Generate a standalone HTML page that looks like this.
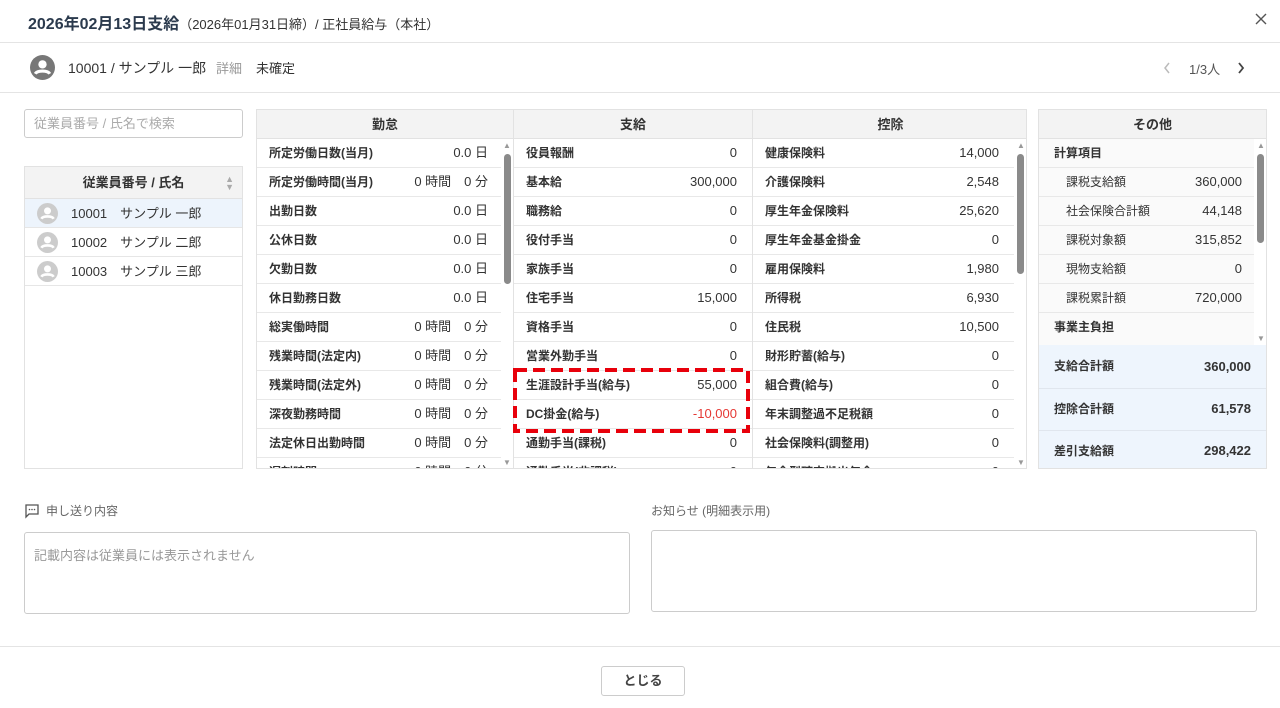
<!DOCTYPE html>
<html><head><meta charset="utf-8"><style>
*{box-sizing:border-box;margin:0;padding:0}
body{width:1280px;height:708px;background:#fff;font-family:"Liberation Sans","Noto Sans CJK JP",sans-serif;color:#333;position:relative;overflow:hidden}
.a{position:absolute}
.hr{position:absolute;left:0;width:1280px;height:1px;background:#e4e4e4}
.row{position:absolute;left:0;right:0;height:29px;line-height:28px;border-bottom:1px solid #e8e8e8;font-size:12px;font-weight:bold;color:#333}
.row .l{position:absolute;left:12px;top:0}
.row .v{position:absolute;top:0;font-weight:normal;font-size:13px;color:#333}
.th{position:absolute;top:0;height:29px;background:#f3f3f3;border-bottom:1px solid #e2e2e2;font-size:13px;font-weight:bold;text-align:center;line-height:29px;color:#333}
.sb{position:absolute;width:7px;background:#8a8a8a;border-radius:4px}
.tri{position:absolute;font-size:8px;color:#999}
.emp{position:absolute;left:46px;font-size:13px;line-height:29px}
</style></head><body>
<div class="a" style="left:28px;top:10px;font-size:16px;font-weight:bold;color:#2b3a4d">2026年02月13日支給<span style="font-size:13px;font-weight:normal;color:#333">（2026年01月31日締）/ 正社員給与（本社）</span></div>
<svg class="a" style="left:1255px;top:13px" width="12" height="12" viewBox="0 0 12 12"><path d="M1 1L11 11M11 1L1 11" stroke="#555" stroke-width="1.4"/></svg>
<div class="hr" style="top:42px"></div>
<svg class="a" style="left:30px;top:55px" width="25" height="25" viewBox="0 0 24 24"><circle cx="12" cy="12" r="12" fill="#777"/><circle cx="12" cy="9" r="4" fill="#fff"/><path d="M5 18c2-3.5 12-3.5 14 0" stroke="#fff" stroke-width="3" fill="none"/></svg>
<div class="a" style="left:68px;top:58px;font-size:14px;color:#333">10001 / サンプル 一郎 <span style="font-size:13px;color:#999;margin-left:6px">詳細</span><span style="font-size:13px;margin-left:14px">未確定</span></div>
<svg class="a" style="left:1163px;top:62px" width="8" height="12" viewBox="0 0 8 12"><path d="M6 1L2 6l4 5" stroke="#bbb" stroke-width="1.5" fill="none"/></svg>
<div class="a" style="left:1189px;top:59px;font-size:13px;color:#555">1/3人</div>
<svg class="a" style="left:1237px;top:62px" width="8" height="12" viewBox="0 0 8 12"><path d="M2 1l4 5-4 5" stroke="#444" stroke-width="1.8" fill="none"/></svg>
<div class="hr" style="top:92px"></div>

<div class="a" style="left:24px;top:109px;width:219px;height:29px;border:1px solid #ccc;border-radius:3px;font-size:13px;color:#aaa;padding:0 9px;line-height:27px">従業員番号 / 氏名で検索</div>
<div class="a" style="left:24px;top:166px;width:219px;height:303px;border:1px solid #e2e2e2">
 <div class="th" style="left:0;right:0;height:32px;line-height:32px">従業員番号 / 氏名<span style="position:absolute;right:8px;top:0;font-size:9px;color:#aaa;line-height:8px;padding-top:8px">▲<br>▼</span></div>
 <div class="a" style="left:0;right:0;top:32px;height:29px;background:#edf4fc;border-bottom:1px solid #e6e6e6"></div>
 <div class="a" style="left:0;right:0;top:61px;height:29px;border-bottom:1px solid #e6e6e6"></div>
 <div class="a" style="left:0;right:0;top:90px;height:29px;border-bottom:1px solid #e6e6e6"></div>
 <svg class="a" style="left:12px;top:36px" width="21" height="21" viewBox="0 0 24 24"><circle cx="12" cy="12" r="12" fill="#ccc"/><circle cx="12" cy="9" r="4" fill="#fff"/><path d="M5 18c2-3.5 12-3.5 14 0" stroke="#fff" stroke-width="3" fill="none"/></svg>
 <svg class="a" style="left:12px;top:65px" width="21" height="21" viewBox="0 0 24 24"><circle cx="12" cy="12" r="12" fill="#ccc"/><circle cx="12" cy="9" r="4" fill="#fff"/><path d="M5 18c2-3.5 12-3.5 14 0" stroke="#fff" stroke-width="3" fill="none"/></svg>
 <svg class="a" style="left:12px;top:94px" width="21" height="21" viewBox="0 0 24 24"><circle cx="12" cy="12" r="12" fill="#ccc"/><circle cx="12" cy="9" r="4" fill="#fff"/><path d="M5 18c2-3.5 12-3.5 14 0" stroke="#fff" stroke-width="3" fill="none"/></svg>
 <div class="emp" style="top:32px">10001　サンプル 一郎</div>
 <div class="emp" style="top:61px">10002　サンプル 二郎</div>
 <div class="emp" style="top:90px">10003　サンプル 三郎</div>
</div>

<div class="a" style="left:256px;top:109px;width:771px;height:360px;border:1px solid #e2e2e2;overflow:hidden">
 <div class="th" style="left:0;width:257px;border-right:1px solid #e2e2e2">勤怠</div>
 <div class="th" style="left:257px;width:239px;border-right:1px solid #e2e2e2">支給</div>
 <div class="th" style="left:496px;width:275px">控除</div>
 <div class="a" style="left:0;top:29px;width:244px;height:331px">
  <div class="row" style="top:0"><span class="l">所定労働日数(当月)</span><span class="v" style="right:13px">0.0 日</span></div>
  <div class="row" style="top:29px"><span class="l">所定労働時間(当月)</span><span class="v" style="right:13px">0 時間　0 分</span></div>
  <div class="row" style="top:58px"><span class="l">出勤日数</span><span class="v" style="right:13px">0.0 日</span></div>
  <div class="row" style="top:87px"><span class="l">公休日数</span><span class="v" style="right:13px">0.0 日</span></div>
  <div class="row" style="top:116px"><span class="l">欠勤日数</span><span class="v" style="right:13px">0.0 日</span></div>
  <div class="row" style="top:145px"><span class="l">休日勤務日数</span><span class="v" style="right:13px">0.0 日</span></div>
  <div class="row" style="top:174px"><span class="l">総実働時間</span><span class="v" style="right:13px">0 時間　0 分</span></div>
  <div class="row" style="top:203px"><span class="l">残業時間(法定内)</span><span class="v" style="right:13px">0 時間　0 分</span></div>
  <div class="row" style="top:232px"><span class="l">残業時間(法定外)</span><span class="v" style="right:13px">0 時間　0 分</span></div>
  <div class="row" style="top:261px"><span class="l">深夜勤務時間</span><span class="v" style="right:13px">0 時間　0 分</span></div>
  <div class="row" style="top:290px"><span class="l">法定休日出勤時間</span><span class="v" style="right:13px">0 時間　0 分</span></div>
  <div class="row" style="top:319px"><span class="l">遅刻時間</span><span class="v" style="right:13px">0 時間　0 分</span></div>
 </div>
 <div class="a" style="left:244px;top:29px;width:13px;height:331px;border-right:1px solid #e2e2e2"></div>
 <div class="tri" style="left:246px;top:31px">▲</div><div class="sb" style="left:247px;top:44px;height:130px"></div><div class="tri" style="left:246px;top:348px">▼</div>
 <div class="a" style="left:257px;top:29px;width:239px;height:331px;border-right:1px solid #e2e2e2">
  <div class="row" style="top:0"><span class="l">役員報酬</span><span class="v" style="right:15px">0</span></div>
  <div class="row" style="top:29px"><span class="l">基本給</span><span class="v" style="right:15px">300,000</span></div>
  <div class="row" style="top:58px"><span class="l">職務給</span><span class="v" style="right:15px">0</span></div>
  <div class="row" style="top:87px"><span class="l">役付手当</span><span class="v" style="right:15px">0</span></div>
  <div class="row" style="top:116px"><span class="l">家族手当</span><span class="v" style="right:15px">0</span></div>
  <div class="row" style="top:145px"><span class="l">住宅手当</span><span class="v" style="right:15px">15,000</span></div>
  <div class="row" style="top:174px"><span class="l">資格手当</span><span class="v" style="right:15px">0</span></div>
  <div class="row" style="top:203px"><span class="l">営業外勤手当</span><span class="v" style="right:15px">0</span></div>
  <div class="row" style="top:232px"><span class="l">生涯設計手当(給与)</span><span class="v" style="right:15px">55,000</span></div>
  <div class="row" style="top:261px"><span class="l">DC掛金(給与)</span><span class="v" style="right:15px;color:#e53935">-10,000</span></div>
  <div class="row" style="top:290px"><span class="l">通勤手当(課税)</span><span class="v" style="right:15px">0</span></div>
  <div class="row" style="top:319px"><span class="l">通勤手当(非課税)</span><span class="v" style="right:15px">0</span></div>
 </div>
 <div class="a" style="left:496px;top:29px;width:261px;height:331px">
  <div class="row" style="top:0"><span class="l">健康保険料</span><span class="v" style="right:15px">14,000</span></div>
  <div class="row" style="top:29px"><span class="l">介護保険料</span><span class="v" style="right:15px">2,548</span></div>
  <div class="row" style="top:58px"><span class="l">厚生年金保険料</span><span class="v" style="right:15px">25,620</span></div>
  <div class="row" style="top:87px"><span class="l">厚生年金基金掛金</span><span class="v" style="right:15px">0</span></div>
  <div class="row" style="top:116px"><span class="l">雇用保険料</span><span class="v" style="right:15px">1,980</span></div>
  <div class="row" style="top:145px"><span class="l">所得税</span><span class="v" style="right:15px">6,930</span></div>
  <div class="row" style="top:174px"><span class="l">住民税</span><span class="v" style="right:15px">10,500</span></div>
  <div class="row" style="top:203px"><span class="l">財形貯蓄(給与)</span><span class="v" style="right:15px">0</span></div>
  <div class="row" style="top:232px"><span class="l">組合費(給与)</span><span class="v" style="right:15px">0</span></div>
  <div class="row" style="top:261px"><span class="l">年末調整過不足税額</span><span class="v" style="right:15px">0</span></div>
  <div class="row" style="top:290px"><span class="l">社会保険料(調整用)</span><span class="v" style="right:15px">0</span></div>
  <div class="row" style="top:319px"><span class="l">年金型確定拠出年金</span><span class="v" style="right:15px">0</span></div>
 </div>
 <div class="a" style="left:757px;top:29px;width:14px;height:331px;background:#fff"></div>
 <div class="tri" style="left:760px;top:31px">▲</div><div class="sb" style="left:760px;top:44px;height:120px"></div><div class="tri" style="left:760px;top:348px">▼</div>
</div>
<svg class="a" style="left:512px;top:367px" width="240" height="67" viewBox="0 0 240 67"><rect x="3" y="3" width="233" height="61" fill="none" stroke="#e8000b" stroke-width="4" stroke-dasharray="12 6"/></svg>

<div class="a" style="left:1038px;top:109px;width:229px;height:360px;border:1px solid #e2e2e2;overflow:hidden;background:#fafafa">
 <div class="th" style="left:0;right:0">その他</div>
 <div class="a" style="left:0;top:29px;width:215px;height:206px">
  <div class="row" style="top:0"><span class="l" style="left:15px">計算項目</span></div>
  <div class="row" style="top:29px;font-weight:normal"><span class="l" style="left:27px">課税支給額</span><span class="v" style="right:12px">360,000</span></div>
  <div class="row" style="top:58px;font-weight:normal"><span class="l" style="left:27px">社会保険合計額</span><span class="v" style="right:12px">44,148</span></div>
  <div class="row" style="top:87px;font-weight:normal"><span class="l" style="left:27px">課税対象額</span><span class="v" style="right:12px">315,852</span></div>
  <div class="row" style="top:116px;font-weight:normal"><span class="l" style="left:27px">現物支給額</span><span class="v" style="right:12px">0</span></div>
  <div class="row" style="top:145px;font-weight:normal"><span class="l" style="left:27px">課税累計額</span><span class="v" style="right:12px">720,000</span></div>
  <div class="row" style="top:174px;border:0"><span class="l" style="left:15px">事業主負担</span></div>
 </div>
 <div class="a" style="left:215px;top:29px;width:14px;height:206px;background:#fff"></div>
 <div class="tri" style="left:218px;top:31px">▲</div><div class="sb" style="left:218px;top:44px;height:89px"></div><div class="tri" style="left:218px;top:224px">▼</div>
 <div class="a" style="left:0;right:0;top:235px;height:125px;background:#eef5fd"></div>
 <div class="a" style="left:0;right:0;top:278px;height:1px;background:#e0e6ee"></div>
 <div class="a" style="left:0;right:0;top:320px;height:1px;background:#e0e6ee"></div>
 <div class="a" style="left:15px;top:235px;line-height:43px;font-size:12px;font-weight:bold">支給合計額</div><div class="a" style="right:15px;top:235px;line-height:43px;font-size:13px;font-weight:bold">360,000</div>
 <div class="a" style="left:15px;top:278px;line-height:42px;font-size:12px;font-weight:bold">控除合計額</div><div class="a" style="right:15px;top:278px;line-height:42px;font-size:13px;font-weight:bold">61,578</div>
 <div class="a" style="left:15px;top:321px;line-height:40px;font-size:12px;font-weight:bold">差引支給額</div><div class="a" style="right:15px;top:321px;line-height:40px;font-size:13px;font-weight:bold">298,422</div>
</div>

<svg class="a" style="left:24px;top:503px" width="16" height="16" viewBox="0 0 16 16"><path d="M2 2h12v9H5l-3 3z" fill="none" stroke="#555" stroke-width="1.3"/><circle cx="5.5" cy="6.5" r=".8" fill="#555"/><circle cx="8" cy="6.5" r=".8" fill="#555"/><circle cx="10.5" cy="6.5" r=".8" fill="#555"/></svg>
<div class="a" style="left:46px;top:502px;font-size:12px;color:#666">申し送り内容</div>
<div class="a" style="left:651px;top:502px;font-size:12px;color:#666">お知らせ (明細表示用)</div>
<div class="a" style="left:24px;top:532px;width:606px;height:82px;border:1px solid #ccc;border-radius:3px;font-size:13px;color:#999;padding:12px 9px">記載内容は従業員には表示されません</div>
<div class="a" style="left:651px;top:530px;width:606px;height:82px;border:1px solid #ccc;border-radius:3px"></div>
<div class="hr" style="top:646px"></div>
<div class="a" style="left:601px;top:666px;width:84px;height:30px;border:1px solid #ccc;border-radius:3px;font-size:13px;font-weight:bold;text-align:center;line-height:28px;color:#444">とじる</div>
</body></html>
